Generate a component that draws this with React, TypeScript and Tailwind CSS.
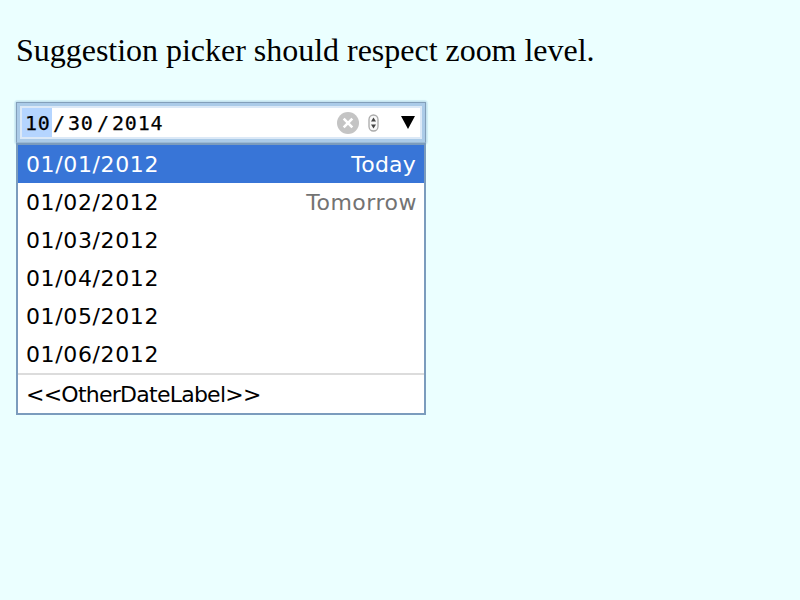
export default function App() {
  const rows = ["01/01/2012", "01/02/2012", "01/03/2012", "01/04/2012", "01/05/2012", "01/06/2012"];
  return (
    <main className="isolate h-[600px] w-[800px] overflow-hidden bg-[#ebffff] px-4 pt-[32px] text-black">
      <p className="h-[70px] whitespace-nowrap font-['Liberation_Serif',serif] text-[32px] leading-[37px] tracking-[-0.02px]">Suggestion picker should respect zoom level.</p>
      <div className="relative h-[41px] w-[410px] border border-[#839fba] border-b-[#9ab9d4] bg-[#abcbe8] p-[3px]">
        <div className="absolute -inset-[2px] -z-10 rounded-[3px] bg-[#c6e4f0] shadow-[0_0_1px_1px_#d0eef6]" />
        <div className="flex h-[33px] items-center border-2 border-[#dce9f7] bg-white font-['DejaVu_Sans_Mono',monospace] text-[20px] leading-[31px] tracking-[0.8px] [-webkit-text-stroke:0.25px_black]">
          <span className="h-[29px] w-[30px] bg-[#b5d5ff] pl-[3px]">10</span>
          <span className="mt-[2px] w-4 pl-px">/</span>
          <span className="mt-[2px] w-7">30</span>
          <span className="mt-[2px] w-4 pl-px">/</span>
          <span className="mt-[2px]">2014</span>
          <svg className="ml-auto mr-[9px]" width="22" height="22" viewBox="0 0 22 22">
            <circle cx="11" cy="11" r="11" fill="#c4c4c4" />
            <path d="M6.7 6.7l8.6 8.6M15.3 6.7l-8.6 8.6" stroke="#fff" strokeWidth="2.6" />
          </svg>
          <svg className="mr-[22px] mt-px" width="11" height="18" viewBox="0 0 11 18">
            <rect x="1" y="1" width="9" height="16" rx="4.5" fill="#f8f8f8" stroke="#aaa" strokeWidth="1.3" />
            <path d="M5.5 3.5L8 7.5H3zM5.5 14.5L8 10.5H3z" fill="#444" />
          </svg>
          <svg className="mr-[5px]" width="14" height="13" viewBox="0 0 14 13"><path d="M0 0h14L7 13z" /></svg>
        </div>
      </div>
      <div className="relative w-[410px] border-2 border-[#7b9cbd] bg-white font-['DejaVu_Sans',sans-serif] text-[22px]">
        {rows.map((r, i) => (
          <div key={r} className={`flex h-[38px] items-center justify-between px-2 ${i === 0 ? "bg-[#3875d7] text-white" : ""}`}>
            <span className="tracking-[0.62px]">{r}</span>
            <span className={i === 1 ? "-mr-px tracking-[0.5px] text-[#737373]" : "tracking-[0.2px]"}>{i === 0 ? "Today" : i === 1 ? "Tomorrow" : ""}</span>
          </div>
        ))}
        <div className="h-10 border-t-2 border-[#dcdcdc] px-2 leading-[40px] tracking-[-0.75px]">&lt;&lt;OtherDateLabel&gt;&gt;</div>
      </div>
    </main>
  );
}
